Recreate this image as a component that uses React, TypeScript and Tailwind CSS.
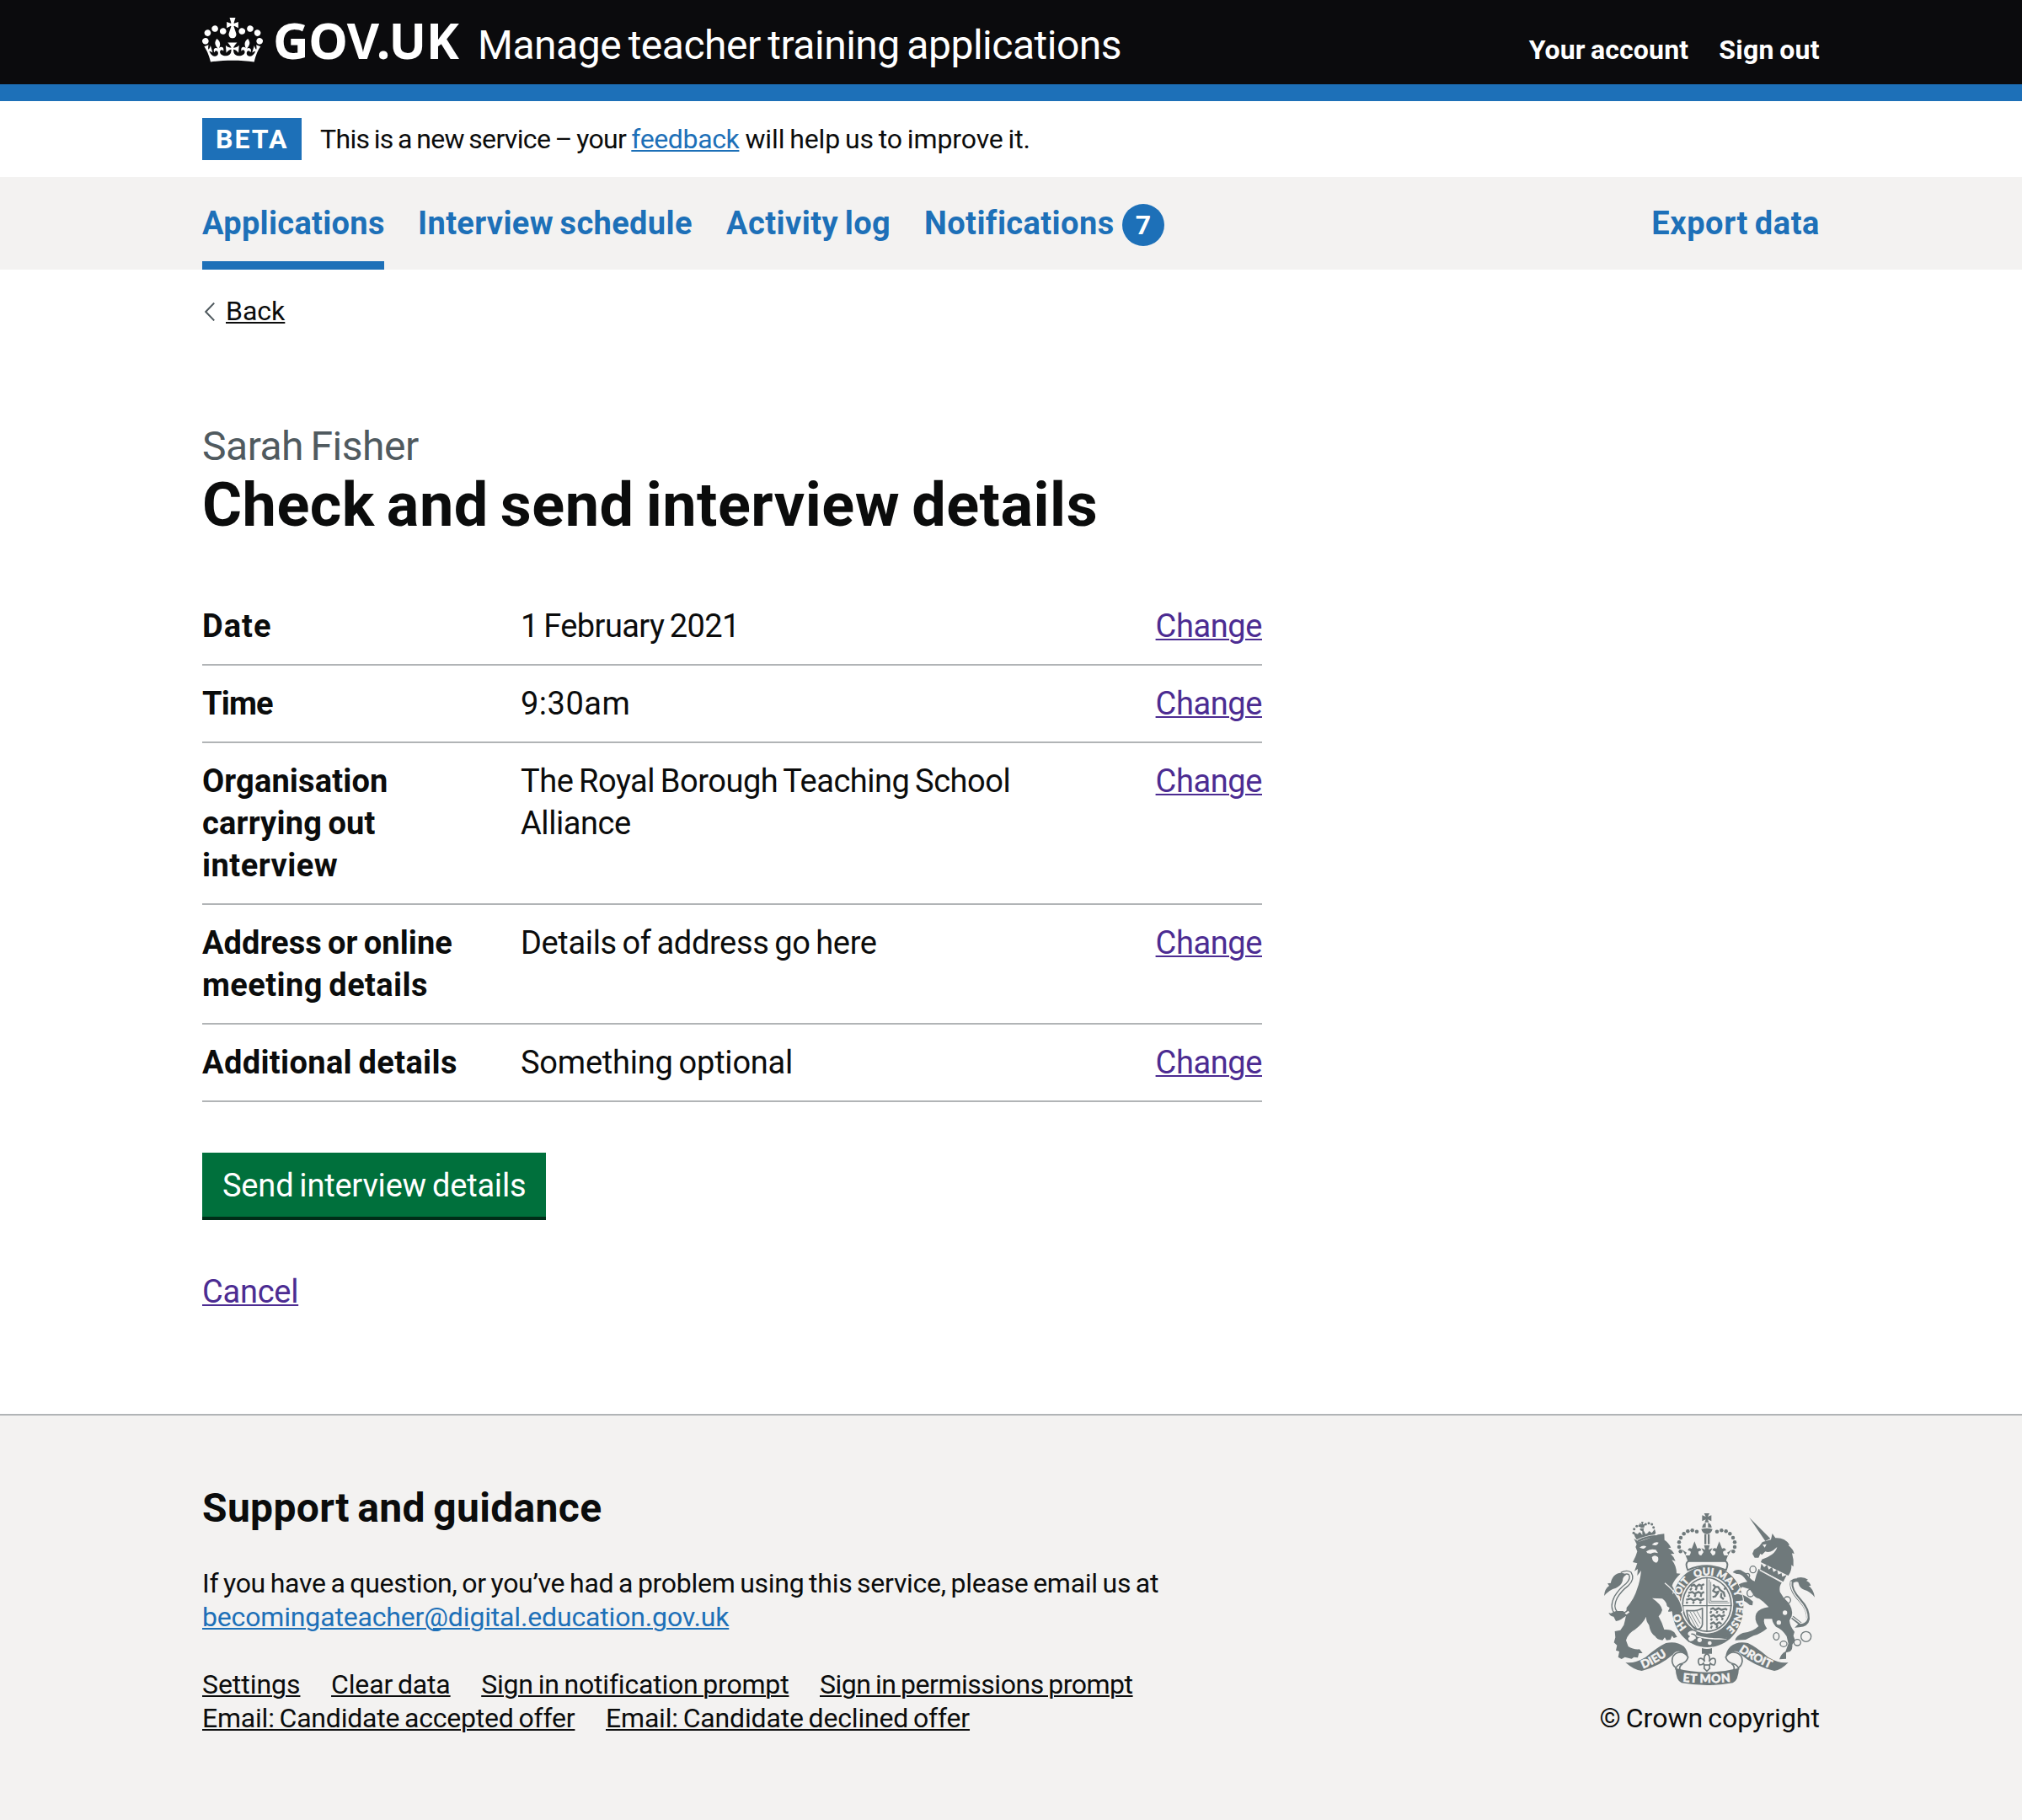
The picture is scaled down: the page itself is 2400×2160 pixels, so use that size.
import type { ReactNode } from "react";

function CrownLogo() {
  return (
    <svg viewBox="0 0 132 97" className="mt-[21px] h-[53px] w-[72px] shrink-0" fill="currentColor" aria-hidden="true">
      <path
        fillRule="evenodd"
        d="M25 30.2c3.5 1.5 7.7-.2 9.1-3.7 1.5-3.6-.2-7.8-3.9-9.2-3.6-1.4-7.6.3-9.1 3.9-1.4 3.5.3 7.5 3.9 9zM9 39.5c3.6 1.5 7.8-.2 9.2-3.7 1.5-3.6-.2-7.8-3.9-9.1-3.6-1.5-7.6.2-9.1 3.8-1.4 3.5.3 7.5 3.8 9zM4.4 57.2c3.5 1.5 7.7-.2 9.1-3.8 1.5-3.6-.2-7.7-3.9-9.1-3.5-1.5-7.6.3-9.1 3.8-1.4 3.5.3 7.6 3.9 9.1zm38.3-21.4c3.5 1.5 7.7-.2 9.1-3.8 1.5-3.6-.2-7.7-3.9-9.1-3.6-1.5-7.6.3-9.1 3.8-1.3 3.6.4 7.7 3.9 9.1zm64.4-5.6c-3.6 1.5-7.8-.2-9.1-3.7-1.5-3.6.2-7.8 3.8-9.2 3.6-1.4 7.7.3 9.2 3.9 1.3 3.5-.4 7.5-3.9 9zm15.9 9.3c-3.6 1.5-7.7-.2-9.1-3.7-1.5-3.6.2-7.8 3.7-9.1 3.6-1.5 7.7.2 9.2 3.8 1.5 3.5-.3 7.5-3.8 9zm4.7 17.7c-3.6 1.5-7.8-.2-9.2-3.8-1.5-3.6.2-7.7 3.9-9.1 3.6-1.5 7.7.3 9.2 3.8 1.3 3.5-.4 7.6-3.9 9.1zM89.3 35.8c-3.6 1.5-7.8-.2-9.2-3.8-1.4-3.6.2-7.7 3.9-9.1 3.6-1.5 7.7.3 9.2 3.8 1.4 3.6-.3 7.7-3.9 9.1zM69.7 17.7l8.9 4.7V9.3l-8.9 2.8c-.2-.3-.5-.6-.9-.9L72.4 0H59.6l3.5 11.2c-.3.3-.6.5-.9.9l-8.8-2.8v13.1l8.8-4.7c.3.3.6.7.9.9l-5 15.4v.1c-.2.8-.4 1.6-.4 2.4 0 4.1 3.1 7.5 7 8.1h.2c.3 0 .7.1 1 .1.4 0 .7 0 1-.1h.2c4-.6 7.1-4.1 7.1-8.1 0-.8-.1-1.7-.4-2.4V34l-5.1-15.4c.4-.2.7-.6 1-.9zM66 92.8c16.9 0 32.8 1.1 47.1 3.2 4-16.9 8.9-26.7 14-33.5l-9.6-3.4c1 4.9 1.1 7.2 0 10.2-1.5-1.4-3-4.3-4.2-8.7L108.6 76c2.8-2 5-3.2 7.5-3.3-4.4 9.4-10 11.9-13.6 11.2-4.3-.8-6.3-4.6-5.6-7.9 1-4.7 5.7-5.9 8-.5 4.3-8.7-3-11.4-7.6-8.8 7.1-7.2 7.9-13.5 2.1-21.1-8 6.1-8.1 12.3-4.5 20.8-4.7-5.4-12.1-2.5-9.5 6.2 3.4-5.2 7.9-2 7.2 3.1-.6 4.3-6.4 7.8-13.5 7.2-10.3-.9-10.9-8-11.2-13.8 2.5-.5 7.1 1.8 11 7.3L80.2 60c-4.1 4.4-8 5.3-12.3 5.4 1.4-4.4 8-11.6 8-11.6H55.5s6.4 7.2 7.9 11.6c-4.2-.1-8-1-12.3-5.4l1.4 16.4c3.9-5.5 8.5-7.7 10.9-7.3-.3 5.8-.9 12.8-11.1 13.8-7.2.6-12.9-2.9-13.5-7.2-.7-5 3.8-8.3 7.1-3.1 2.7-8.7-4.6-11.6-9.4-6.2 3.7-8.5 3.6-14.7-4.6-20.8-5.8 7.6-5 13.9 2.2 21.1-4.7-2.6-11.9.1-7.7 8.8 2.3-5.5 7.1-4.2 8.1.5.7 3.3-1.3 7.1-5.7 7.9-3.5.7-9-1.8-13.5-11.2 2.5.1 4.7 1.3 7.5 3.3l-4.7-15.4c-1.2 4.4-2.7 7.2-4.3 8.7-1.1-3-.9-5.3 0-10.2l-9.5 3.4c5 6.9 9.9 16.7 14 33.5 14.8-2.1 30.8-3.2 47.7-3.2z"
      />
    </svg>
  );
}

const INK = "#6f797b";
const PAPER = "#f3f2f1";

const crownBeads: [number, number][] = [
  [372, 113], [356, 109], [340, 112], [326, 121], [315, 135], [309, 151], [309, 168], [314, 184],
  [444, 113], [460, 109], [476, 112], [490, 121], [501, 135], [507, 151], [507, 168], [502, 184],
];

const lionBeads: [number, number][] = [
  [147, 118], [149, 104], [158, 94], [168, 92], [190, 87], [201, 83], [212, 87], [218, 98],
];

const chainRings: [number, number, number, number][] = [
  [572, 248, 11, 12], [552, 270, 8, 8], [563, 332, 12, 13], [694, 357, 12, 12],
  [655, 486, 10, 13], [681, 513, 12, 10], [730, 508, 12, 11], [761, 487, 18, 18],
];

function RoyalArms() {
  return (
    <svg viewBox="36 42 762 624" className="h-[208px] w-[254px]" fill={INK} aria-hidden="true">
      <defs>
        <path id="garter" d="M410 481C340 481 308 430 308 378C308 320 350 268 410 268C470 268 513 320 513 378C513 430 480 481 410 481" />
        <path id="motto-left" d="M179 602Q225 585 285 541" />
        <path id="motto-mid" d="M321 647Q408 656 497 647" />
        <path id="motto-right" d="M519 538Q570 574 646 606" />
      </defs>

      {/* Lion */}
      <path d="M158 158L148 138L166 149Q198 140 234 124L256 121L257 143Q270 150 280 170L270 172Q284 178 292 192L279 193Q290 202 296 218L283 214Q300 236 300 262L314 263Q290 285 284 306L292 320Q290 340 300 352Q318 370 320 398L310 404L300 396L296 408L286 404L280 398L270 397L276 384L268 380Q266 366 250 352L213 350Q246 372 249 392Q246 405 236 415Q250 440 256 462Q280 460 292 472L302 488L290 492L284 484L278 498L264 500L258 490L250 500Q230 498 224 486Q206 474 202 446Q190 430 192 416Q180 440 152 462Q128 474 120 500L128 522Q146 534 168 532L179 546L166 546L162 562L148 560L140 566L116 560L104 567L92 560L96 540L84 536L88 518L77 508L82 490L80 468L100 464L112 446Q122 412 122 384Q150 352 160 316Q170 290 174 252L160 270L162 246L150 254L160 226L144 222Q156 200 160 184L154 168Z" />
      <path d="M168 170Q180 160 192 166Q188 176 180 174ZM212 160Q222 148 236 152Q232 162 222 162ZM192 184Q206 172 226 178L234 190L226 188Q216 186 208 192L196 190ZM212 204Q222 194 234 204Q238 218 228 224Q214 222 212 204Z" fill={PAPER} />
      <path d="M130 398Q104 420 84 402Q66 382 84 346Q100 320 124 302Q146 280 134 262Q122 254 104 264" fill="none" stroke={INK} strokeWidth="15" />
      <path d="M130 398Q104 420 84 402Q66 382 84 346Q100 320 124 302Q146 280 134 262Q122 254 104 264" fill="none" stroke={PAPER} strokeWidth="7" />
      <path d="M112 262Q92 256 76 272Q66 286 66 296L54 298L60 306Q44 316 42 342Q60 320 84 314Q104 304 108 288Q108 274 120 268ZM84 396L66 404L58 402Q64 416 76 416L84 432Q104 428 122 410L110 396Z" />

      {/* Lion's crown */}
      <path d="M152 132L146 116L162 122Q168 112 172 118L178 126L178 112L170 108L170 102L184 102L182 108L190 122L198 118Q202 108 206 114L212 118L222 104L226 118L222 124Q186 128 158 142ZM168 82L176 88L174 78L182 78L180 88L188 86L184 100L172 100Z" />
      <path d="M160 144Q190 128 226 126L228 132Q196 134 164 151Z" />
      {lionBeads.map(([x, y]) => (
        <circle key={`${x}-${y}`} cx={x} cy={y} r="4.5" />
      ))}

      {/* Unicorn */}
      <path d="M559 63L634 138L616 147Z" />
      <path d="M641 120L652 136Q686 134 702 160L698 162Q716 176 719 192L711 190Q718 212 716 238L709 232Q710 254 698 270L600 222L604 212Q624 206 640 194Q656 182 658 168L644 180Q628 190 616 184L604 196L598 192L592 206L578 206L570 192L576 178L594 166L606 150L636 142Z" />
      <path d="M606 160L620 158L614 170Z" fill={PAPER} />
      <path d="M598 249L602 227L612 240L622 231L628 248L640 240L645 257L658 249L662 266L674 261L676 274L692 268L680 292Z" />
      <path d="M592 246L676 293Q664 306 668 328Q678 348 696 364Q716 388 710 414L702 430Q704 452 720 470L716 484L722 500L712 516Q714 532 704 540L690 544L690 566L666 568Q672 548 688 540L698 512L692 486Q676 460 654 452Q642 440 640 424L612 424Q608 440 622 458Q600 476 574 484L546 498L508 500Q512 484 536 474Q572 470 592 450Q574 426 584 404Q596 386 628 382Q610 362 594 352Q576 346 574 338L560 318L540 312Q530 308 528 318L536 338Q556 346 572 362L570 376L560 374Q548 364 536 358L528 362L516 346L524 340L514 314Q518 298 540 294L552 292L540 276Q528 262 514 264L500 258Q510 246 528 250L548 262Q566 288 578 290Q584 266 592 246Z" />
      <path d="M596 250L678 295" stroke={PAPER} strokeWidth="4" />
      <path d="M712 418L742 442L736 448Q764 446 768 424Q770 390 740 358Q704 320 710 292Q724 282 736 288" fill="none" stroke={INK} strokeWidth="12" />
      <path d="M712 418L742 440Q762 438 765 420Q766 390 737 358Q702 320 708 290" fill="none" stroke={PAPER} strokeWidth="4" />
      <path d="M728 278Q752 272 768 284L762 288Q776 294 778 306L770 306Q788 318 792 347Q776 326 754 320Q738 314 734 296Z" />
      <circle cx="686" cy="402" r="8" fill={PAPER} />
      <circle cx="664" cy="437" r="8" fill={PAPER} />
      {chainRings.map(([x, y, rx, ry]) => (
        <ellipse key={`${x}-${y}`} cx={x} cy={y} rx={rx} ry={ry} fill="none" stroke={INK} strokeWidth="4" />
      ))}

      {/* Garter and shield */}
      <ellipse cx="410" cy="381" rx="132" ry="148" fill={PAPER} />
      <path fillRule="evenodd" d="M410 236C488 236 538 300 538 378C538 462 484 525 410 525C336 525 283 462 283 378C283 300 334 236 410 236ZM408 270A94 103 0 0 0 408 476A94 103 0 0 0 408 270Z" />
      <path fillRule="evenodd" d="M408 275A89 98 0 0 0 408 471A89 98 0 0 0 408 275ZM408 280A84 93 0 0 1 408 466A84 93 0 0 1 408 280Z" />
      <path d="M408 275V471M319 377H497" stroke={INK} strokeWidth="4" />
      <path d="M416 284V367H488M422 292V361H482" stroke={INK} strokeWidth="2.5" fill="none" />
      <g fill="none" stroke={INK} strokeWidth="7" strokeLinejoin="round">
        <path d="M350 308l12-6 8 8 10-8 8 4 10-6M354 314l-6 8M372 312l-4 10M390 310l-2 10M342 332l14-4 8 6 14-6 10 6 10-6M346 338l-6 8M368 336l-4 10M388 336l-2 10M334 356l16-4 10 6 14-6 12 6 12-6M338 362l-2 8M362 362l-4 8M386 362l-2 8" />
        <path d="M420 390l10-4 8 6 12-6 10 6 14-4 6 4M424 396l-4 8M446 396l-4 8M468 396l-2 8M420 416l12-6 8 8 12-8 8 6 12-6M426 422l-4 8M446 422l-4 8M464 420l-2 8M420 442l12-6 8 8 12-8 8 6M426 448l-4 10M446 446l-4 10" />
        <path d="M430 302l8 8 10 0 8 12 12 8 4 16M438 310l-8 14 10 6 12-4M448 330l-10 14-10 2M460 332l-2 14 10 8M470 320l6-10" />
        <path d="M336 394Q342 446 370 462Q388 462 392 444V386Q372 398 336 394Z" strokeWidth="5" />
        <path d="M348 398L378 452M360 398L384 440M372 396L388 424M344 408L370 456" strokeWidth="2.5" />
      </g>
      <g fill={PAPER} stroke={PAPER} strokeWidth="1.4" fontFamily="Lato, 'Noto Sans', sans-serif" fontWeight="900" fontSize="36">
        <text><textPath href="#garter" startOffset="80">HO</textPath></text>
        <text><textPath href="#garter" startOffset="180">SOIT</textPath></text>
        <text><textPath href="#garter" startOffset="284">QUI</textPath></text>
        <text><textPath href="#garter" startOffset="360">MAL</textPath></text>
        <text><textPath href="#garter" startOffset="442">Y</textPath></text>
        <text><textPath href="#garter" startOffset="478">PENSE</textPath></text>
      </g>
      <path d="M344 466Q370 500 478 494" stroke={PAPER} strokeWidth="5" fill="none" />
      <circle cx="382" cy="499" r="8" fill={PAPER} />
      <circle cx="418" cy="510" r="7" fill={PAPER} />
      <path d="M370 468Q352 458 340 470Q334 480 344 486Q334 494 344 504Q358 510 368 496" fill={PAPER} stroke={INK} strokeWidth="5" />
      <path d="M352 478Q364 476 372 490" stroke={INK} strokeWidth="4" fill="none" />
      <path d="M424 484L434 472L462 482L484 494Q456 498 424 484Z" />

      {/* Lion's paw, resting on the garter */}
      <path d="M250 340L292 334Q318 366 322 394L312 402L304 395L300 408L289 405L282 396L270 398L276 384L266 378Q264 360 250 352Z" />
      <path d="M258 296Q286 318 304 346Q318 368 323 396L316 402" stroke={PAPER} strokeWidth="4" fill="none" />

      {/* Imperial crown */}
      <path d="M340 250Q328 224 344 218H472Q488 224 476 250Q408 220 340 250Z" fill={PAPER} stroke={INK} strokeWidth="6" />
      <path d="M318 176L336 188L330 198L346 198Q354 186 348 182L340 180Q342 168 354 174L364 148L374 174Q386 168 388 180L378 184Q376 196 388 198L396 186L388 172L402 178L398 162H418L414 178L428 172L420 186L428 198Q440 196 438 184L428 180Q430 168 442 174L452 148L462 174Q474 168 476 180L468 182Q462 186 470 198L486 198L480 188L498 176Q480 196 476 220H340Q334 196 318 176Z" />
      <path d="M399 122H406V158H399ZM411 122H418V158H411Z" />
      <path d="M388 104Q408 98 428 104Q424 120 408 122Q392 120 388 104ZM391 99Q392 86 404 82V98ZM412 82Q424 86 425 99L412 98Z" />
      <path d="M398 48H417L411 60L424 55V76L411 70L415 80H400L404 70L391 76V55L404 60Z" />
      {crownBeads.map(([x, y]) => (
        <circle key={`${x}-${y}`} cx={x} cy={y} r="6.8" />
      ))}

      {/* Scrolls */}
      <path d="M118 579Q150 584 190 560Q232 524 262 510Q300 502 326 522Q340 538 341 558L318 542Q300 534 286 552Q240 592 176 609Q148 606 118 579Z" />
      <path d="M698 579Q666 584 626 560Q584 524 554 510Q516 502 492 522Q476 538 475 558L498 542Q516 534 530 552Q576 592 648 609Q672 606 698 579Z" />
      <path d="M296 599Q350 613 408 614Q466 613 522 599Q520 644 500 652Q408 668 318 652Q298 644 296 599Z" />
      <path d="M296 604Q300 586 322 582Q336 576 341 560Q326 538 304 544Q284 552 284 574Q286 590 298 598M312 606Q308 592 322 584" fill="none" stroke={INK} strokeWidth="5" />
      <path d="M522 604Q518 586 496 582Q480 576 475 560Q490 538 512 544Q534 552 534 574Q532 590 520 598M504 606Q508 592 496 584" fill="none" stroke={INK} strokeWidth="5" />
      <g fill={PAPER} stroke={PAPER} strokeWidth="1.4" fontFamily="Lato, 'Noto Sans', sans-serif" fontWeight="900" fontSize="41">
        <text><textPath href="#motto-left" startOffset="2">DIEU</textPath></text>
        <text fontSize="42" letterSpacing="1.6"><textPath href="#motto-mid" startOffset="1">ET MON</textPath></text>
        <text><textPath href="#motto-right" startOffset="2">DROIT</textPath></text>
      </g>

      {/* Fleur-de-lis */}
      <path d="M390 528Q408 534 426 528V548H390Z" />
      <path d="M408 546Q422 558 416 576Q424 560 436 566Q442 576 434 588Q424 588 420 582Q416 592 418 600L408 610L398 600Q400 592 396 582Q392 588 382 588Q374 576 380 566Q392 560 400 576Q394 558 408 546Z" fill={PAPER} stroke={INK} strokeWidth="5" />
      <path d="M398 588H418" stroke={INK} strokeWidth="5" />
    </svg>
  );
}

function Container({ className = "", children }: { className?: string; children: ReactNode }) {
  return <div className={`mx-auto w-[1920px] ${className}`}>{children}</div>;
}

const rows = [
  {
    key: [["Date", "tracking-[1.04px]"]],
    value: [["1 February 2021", "tracking-[-0.6px]"]],
  },
  {
    key: [["Time", "tracking-[-0.84px]"]],
    value: [["9:30am", "tracking-[0.5px]"]],
  },
  {
    key: [
      ["Organisation", "tracking-[0.15px]"],
      ["carrying out", "tracking-[0.2px]"],
      ["interview", "tracking-[0.5px]"],
    ],
    value: [
      ["The Royal Borough Teaching School", "tracking-[-0.47px]"],
      ["Alliance", "tracking-[-0.44px]"],
    ],
  },
  {
    key: [
      ["Address or online", "tracking-[0.06px]"],
      ["meeting details", "tracking-[0.41px]"],
    ],
    value: [["Details of address go here", "tracking-[-0.36px]"]],
  },
  {
    key: [["Additional details", "tracking-[0.36px]"]],
    value: [["Something optional", "tracking-[-0.22px]"]],
  },
];

const LINK = "underline decoration-2 underline-offset-[2px]";

export default function App() {
  return (
    <div className="flex h-[2160px] flex-col overflow-hidden bg-white font-['Roboto',sans-serif] whitespace-nowrap text-[#0b0c0c] [&_*]:[word-spacing:-0.06em]">
      <header className="h-[120px] border-b-20 border-[#1d70b8] bg-[#0b0b0d] text-white">
        <Container className="flex items-start">
          <CrownLogo />
          <span className="mt-[7px] ml-[12px] w-[243px] font-['Noto_Sans',sans-serif] text-[59px] leading-[80px] font-bold tracking-[-0.5px]">GOV.UK</span>
          <span className="mt-[25px] text-[48px] leading-[57px] tracking-[-0.49px]">Manage teacher training applications</span>
          <nav className="mt-[40px] ml-auto flex gap-[36px] text-[32px] leading-[38px] font-bold">
            <a className="tracking-[0.15px]">Your account</a>
            <a className="tracking-[0.32px]">Sign out</a>
          </nav>
        </Container>
      </header>

      <Container className="flex h-[90px] items-center text-[32px] leading-[50px]">
        <strong className="mr-[22px] w-[118px] bg-[#1d70b8] pl-[16px] font-bold tracking-[2.04px] text-white">BETA</strong>
        <span className="tracking-[-0.66px]">This is a new service – your</span>
        <a className={`ml-[6px] tracking-[-0.37px] text-[#1d70b8] ${LINK}`}>feedback</a>
        <span className="ml-[7px] tracking-[-0.12px]">will help us to improve it.</span>
      </Container>

      <div className="h-[110px] bg-[#f3f2f1] text-[#1d70b8]">
        <Container className="flex h-full gap-[40px] text-[38px] leading-[50px] font-bold">
          <a className="w-[216px] border-b-10 border-[#1d70b8] pt-[30px] tracking-[0.3px]">Applications</a>
          <a className="w-[326px] pt-[30px] tracking-[0.36px]">Interview schedule</a>
          <a className="w-[195px] pt-[30px] tracking-[0.44px]">Activity log</a>
          <a className="flex pt-[30px]">
            <span className="w-[235px] tracking-[0.42px]">Notifications</span>
            <span className="mt-[2px] size-[50px] rounded-full bg-[#1d70b8] text-center text-[32px] leading-[50px] text-white">7</span>
          </a>
          <a className="ml-auto pt-[30px] tracking-[0.58px]">Export data</a>
        </Container>
      </div>

      <Container className="flex-1">
        <a className="mt-[29px] flex items-center text-[32px] leading-[40px]">
          <svg viewBox="0 0 12 22" className="mt-[2px] ml-[3px] h-[22px] w-[12px]" fill="none" stroke="#505a5f" strokeWidth="2" aria-hidden="true">
            <path d="M11.2 .6L1.2 11l10 10.4" />
          </svg>
          <span className={`ml-[13px] ${LINK}`}>Back</span>
        </a>

        <div className="mt-[113px] text-[48px] leading-[55px] tracking-[-0.49px] text-[#505a5f]">Sarah Fisher</div>
        <h1 className="text-[72px] leading-[85px] font-bold tracking-[0.5px]">Check and send interview details</h1>

        <dl className="mt-[56px] w-[1258px] text-[38px] leading-[50px]">
          {rows.map((row) => (
            <div key={row.key[0][0]} className="flex border-b-2 border-[#b1b4b6] py-[20px]">
              <dt className="w-[378px] font-bold">
                {row.key.map(([text, tracking]) => (
                  <div key={text} className={tracking}>{text}</div>
                ))}
              </dt>
              <dd className="flex-1">
                {row.value.map(([text, tracking]) => (
                  <div key={text} className={tracking}>{text}</div>
                ))}
              </dd>
              <dd>
                <a className={`tracking-[-0.4px] text-[#4c2c92] ${LINK}`}>Change</a>
              </dd>
            </div>
          ))}
        </dl>

        <button className="mt-[60px] block w-[408px] bg-[#00703c] pt-[14px] pb-[12px] pl-[24px] text-left text-[38px] leading-[50px] tracking-[-0.19px] text-white shadow-[0_4px_0_#002d18]">
          Send interview details
        </button>
        <div className="mt-[64px] text-[38px] leading-[50px]">
          <a className={`tracking-[-0.25px] text-[#4c2c92] ${LINK}`}>Cancel</a>
        </div>
      </Container>

      <footer className="h-[482px] border-t-2 border-[#b1b4b6] bg-[#f3f2f1]">
        <Container className="flex justify-between text-[32px] leading-[40px]">
          <div className="pt-[81px]">
            <h2 className="text-[48px] leading-[57px] font-bold tracking-[0.33px]">Support and guidance</h2>
            <p className="mt-[41px] tracking-[-0.28px]">
              If you have a question, or you’ve had a problem using this service, please email us at
            </p>
            <a className={`block tracking-[-0.16px] text-[#1d70b8] ${LINK}`}>becomingateacher@digital.education.gov.uk</a>
            <div className="mt-[40px] flex gap-[36.6px]">
              <a className={`tracking-[-0.05px] ${LINK}`}>Settings</a>
              <a className={`tracking-[-0.16px] ${LINK}`}>Clear data</a>
              <a className={`tracking-[-0.2px] ${LINK}`}>Sign in notification prompt</a>
              <a className={`tracking-[-0.48px] ${LINK}`}>Sign in permissions prompt</a>
            </div>
            <div className="flex gap-[36.6px]">
              <a className={`tracking-[-0.21px] ${LINK}`}>Email: Candidate accepted offer</a>
              <a className={`tracking-[-0.18px] ${LINK}`}>Email: Candidate declined offer</a>
            </div>
          </div>
          <div className="flex flex-col items-center pt-[114px]">
            <RoyalArms />
            <span className="mt-[17px] tracking-[0.02px]">© Crown copyright</span>
          </div>
        </Container>
      </footer>
    </div>
  );
}
